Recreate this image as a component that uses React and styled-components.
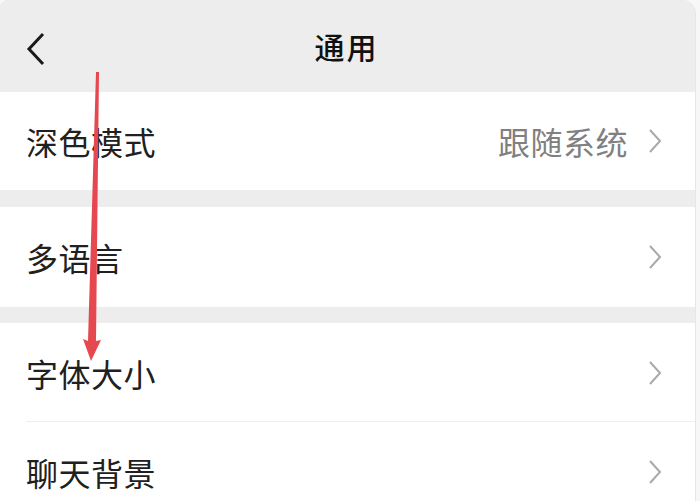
import React from "react";
import styled, { createGlobalStyle } from "styled-components";

const Global = createGlobalStyle`
  html, body {
    margin: 0;
    padding: 0;
    background: #f7f7f7;
    overflow: hidden;
  }
  body {
    font-family: "Noto Sans CJK SC", "Noto Sans", sans-serif;
  }
`;

const Screen = styled.div`
  position: relative;
  width: 695px;
  height: 501px;
  background: #ededed;
  border-radius: 8px 14px 0 0;
  border-right: 1px solid #e6e6e6;
  overflow: hidden;
`;

const Header = styled.div`
  height: 92px;
  display: flex;
  align-items: center;
  justify-content: center;
  position: relative;
  background: #ededed;
`;

const Back = styled.div`
  position: absolute;
  left: 26px;
  top: 32px;
  width: 20px;
  height: 34px;
  display: flex;
`;

const Title = styled.div`
  font-size: 30px;
  font-weight: 500;
  color: #111;
  letter-spacing: 2px;
  margin-left: -2px;
  margin-top: 0;
`;

const Group = styled.div`
  background: #fff;
  margin-top: ${(p) => p.$gap || 0}px;
`;

const Row = styled.div`
  height: ${(p) => p.$h || 100}px;
  display: flex;
  align-items: center;
  padding: 0 33px 0 26px;
  position: relative;
  ${(p) =>
    p.$divider &&
    `&::after {
      content: "";
      position: absolute;
      left: 26px;
      right: 0;
      bottom: 0;
      height: 1px;
      background: #efefef;
    }`}
`;

const Label = styled.div`
  flex: 1;
  font-size: 32px;
  color: #202020;
  letter-spacing: 0.5px;
`;

const Value = styled.div`
  font-size: 32px;
  color: #808080;
  margin-right: 20px;
  letter-spacing: 0.5px;
`;

const Arrow = styled.svg`
  position: absolute;
  left: 0;
  top: 0;
  pointer-events: none;
`;

const Chevron = () => (
  <svg width="14" height="26" viewBox="0 0 14 26">
    <path d="M2 2 L12 13 L2 24" fill="none" stroke="#a9a9a9" strokeWidth="2" />
  </svg>
);

const items = [
  [{ label: "深色模式", value: "跟随系统", h: 98 }],
  [{ label: "多语言", h: 100 }],
  [
    { label: "字体大小", h: 99, divider: true },
    { label: "聊天背景", h: 100 },
  ],
];

const gaps = [0, 17, 16];

export default function App() {
  return (
    <>
      <Global />
      <Screen>
        <Header>
          <Back>
            <svg width="20" height="34" viewBox="0 0 20 34">
              <path d="M17 2 L3 17 L17 32" fill="none" stroke="#1a1a1a" strokeWidth="3" />
            </svg>
          </Back>
          <Title>通用</Title>
        </Header>
        {items.map((group, i) => (
          <Group key={i} $gap={gaps[i]}>
            {group.map((it) => (
              <Row key={it.label} $h={it.h} $divider={it.divider}>
                <Label>{it.label}</Label>
                {it.value && <Value>{it.value}</Value>}
                <Chevron />
              </Row>
            ))}
          </Group>
        ))}
        <Arrow width="695" height="501">
          <polygon
            points="96,72 99,72 96,341 101,340 91,361 83,339 88,341"
            fill="#e5484f"
          />
        </Arrow>
      </Screen>
    </>
  );
}
